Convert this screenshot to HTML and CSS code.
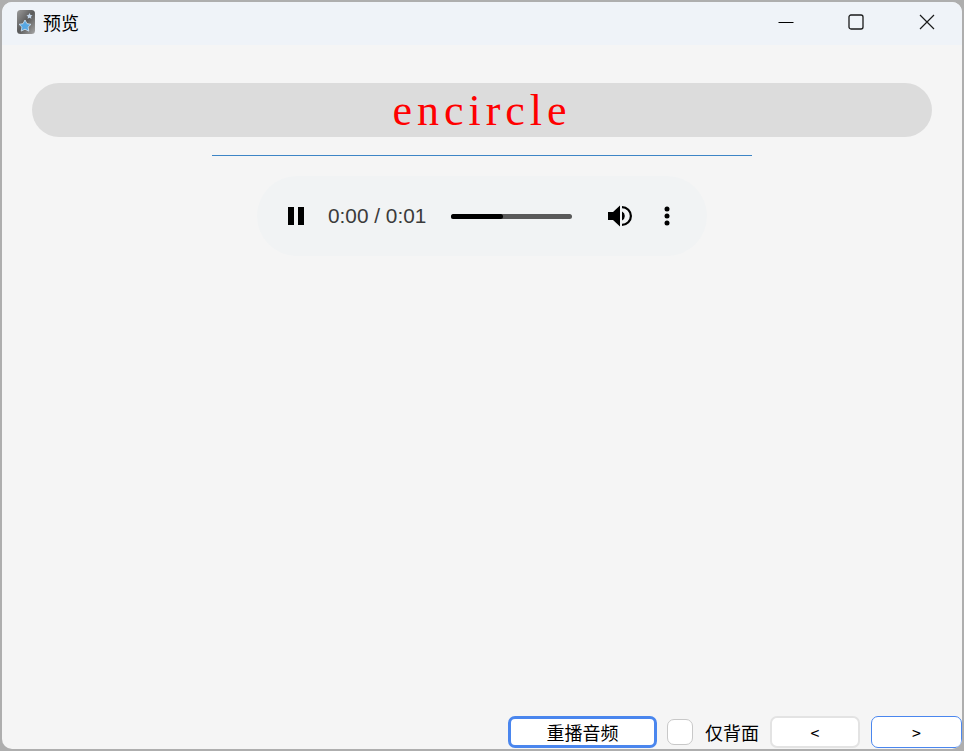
FILE: index.html
```html
<!DOCTYPE html>
<html lang="zh-CN">
<head>
  <meta charset="UTF-8" />
  <title>预览</title>
  <link rel="stylesheet" href="styles.css">
</head>
<body>
  <div class="window">

    <!-- title bar -->
    <header class="titlebar">
      <svg class="app-icon" width="18" height="24" viewBox="0 0 18 24">
        <defs>
          <linearGradient id="appbg" x1="0" y1="0" x2="1" y2="1">
            <stop offset="0" stop-color="#9c9c9c"/>
            <stop offset="0.5" stop-color="#5a5a5a"/>
            <stop offset="1" stop-color="#a8a8a8"/>
          </linearGradient>
        </defs>
        <rect x="0" y="0" width="18" height="24" rx="3.500" fill="url(#appbg)"/>
        <path d="M12.500 3l1 2 2 .3-1.500 1.500.4 2-1.900-1-1.900 1 .4-2-1.500-1.500 2-.3z" fill="#c3d6ea"/>
        <path d="M8 10l2 3.700 4 .6-2.900 2.800.7 4-3.800-1.900-3.800 1.900.7-4L2 14.300l4-.6z" fill="#58a8e4" stroke="#d5e6f5" stroke-width="0.800"/>
      </svg>
      <span class="title">预览</span>
      <div class="win-controls">
        <button class="win-btn">
          <svg width="16" height="16" viewBox="0 0 16 16"><path d="M0.500 8.500h15" stroke="#000" fill="none"/></svg>
        </button>
        <button class="win-btn">
          <svg width="16" height="16" viewBox="0 0 16 16"><rect x="1" y="1" width="14" height="14" rx="2" stroke="#1a1a1a" stroke-width="1.300" fill="none"/></svg>
        </button>
        <button class="win-btn">
          <svg width="16" height="16" viewBox="0 0 16 16"><path d="M1 1l14 14M15 1L1 15" stroke="#1a1a1a" stroke-width="1.200" fill="none"/></svg>
        </button>
      </div>
    </header>

    <main class="content">
      <div class="word">encircle</div>
      <hr class="divider">

      <!-- audio player -->
      <div class="player">
        <svg class="pause" width="16" height="18" viewBox="0 0 16 18"><path d="M0 0h6v18H0zM10 0h6v18h-6z" fill="#000"/></svg>
        <span class="time">0:00 / 0:01</span>
        <div class="track"><div class="track-fill" style="width: 43%"></div></div>
        <svg class="volume" width="26" height="24" viewBox="0 0 26 24">
          <path d="M1 8v8h5l7 6.500V1.500L6 8z" fill="#000"/>
          <path d="M15 7.500a5 5 0 0 1 0 9z" fill="#000"/>
          <path d="M15 2a10 10 0 0 1 0 20v-2.200a7.800 7.800 0 0 0 0-15.600z" fill="#000"/>
        </svg>
        <svg class="more" width="6" height="20" viewBox="0 0 6 20">
          <circle cx="3" cy="3" r="2.500" fill="#000"/>
          <circle cx="3" cy="10" r="2.500" fill="#000"/>
          <circle cx="3" cy="17" r="2.500" fill="#000"/>
        </svg>
      </div>
    </main>

    <footer class="actions">
      <button class="btn btn-replay">重播音频</button>
      <span class="check"></span>
      <span class="check-label">仅背面</span>
      <button class="btn btn-prev">&lt;</button>
      <button class="btn btn-next">&gt;</button>
    </footer>
  </div>
</body>
</html>
```

FILE: styles.css
```css
html, body {
  height: 100%;
}
body {
  margin: 0;
  background: #aeaeae;
  font-family: "Liberation Sans", "Noto Sans CJK SC", sans-serif;
  overflow: hidden;
}
.window {
  box-sizing: border-box;
  height: 747px;
  margin: 2px 2px 0;
  background: #f5f5f5;
  border-radius: 10px;
  display: flex;
  flex-direction: column;
  overflow: hidden;
}
.titlebar {
  box-sizing: border-box;
  height: 43px;
  flex: none;
  background: #eff3f8;
  display: flex;
  align-items: center;
  padding: 0 0 3px 15px;
}
.app-icon {
  flex: none;
}
.title {
  margin-left: 8px;
  font-size: 18px;
  color: #000;
  font-family: "Noto Sans CJK SC", sans-serif;
}
.win-controls {
  margin-left: auto;
  display: flex;
}
.win-btn {
  width: 71px;
  height: 40px;
  padding: 0;
  border: none;
  background: none;
  display: flex;
  align-items: center;
  justify-content: center;
}
.win-btn:first-child {
  margin-right: -1px;
}
.content {
  flex: 1;
  display: flex;
  flex-direction: column;
  align-items: center;
  padding-top: 38px;
}
.word {
  box-sizing: border-box;
  width: 900px;
  height: 54px;
  border-radius: 27px;
  background: #dcdcdc;
  color: #ff0000;
  font-family: "Liberation Serif", serif;
  font-size: 44px;
  letter-spacing: 5px;
  line-height: 56px;
  text-align: center;
}
.divider {
  width: 540px;
  height: 1px;
  margin: 18px 0 20px;
  border: none;
  background: #3d85c6;
}
.player {
  box-sizing: border-box;
  width: 450px;
  height: 80px;
  border-radius: 40px;
  background: #f1f3f4;
  display: flex;
  align-items: center;
  padding-left: 31px;
  color: #3b3b3b;
}
.pause {
  flex: none;
}
.time {
  width: 98px;
  flex: none;
  margin-left: 24px;
  font-size: 20.800px;
  white-space: nowrap;
}
.track {
  margin-left: 25px;
  width: 121px;
  height: 5px;
  border-radius: 3px;
  background: #595959;
  flex: none;
}
.track-fill {
  height: 100%;
  border-radius: 3px;
  background: #000;
}
.volume {
  margin-left: 35px;
  flex: none;
}
.more {
  margin-left: 31px;
  flex: none;
}
.actions {
  flex: none;
  display: flex;
  align-items: center;
  justify-content: flex-end;
  height: 32px;
  margin-bottom: 1px;
}
.btn {
  box-sizing: border-box;
  height: 32px;
  padding: 0;
  background: #fff;
  color: #000;
  font-family: "Noto Sans CJK SC", sans-serif;
  border-radius: 7px;
}
.btn-replay {
  width: 149px;
  font-size: 18px;
  border: 3px solid #4a86ee;
}
.btn-prev {
  width: 90px;
  margin-left: 11px;
  font-size: 16px;
  border: 2px solid #e3e3e3;
}
.btn-next {
  width: 91px;
  margin-left: 11px;
  font-size: 16px;
  border: 1.500px solid #4a86ee;
}
.check {
  box-sizing: border-box;
  width: 26px;
  height: 26px;
  margin-left: 10px;
  background: #fff;
  border: 1.500px solid #c8c8c8;
  border-radius: 7px;
}
.check-label {
  margin-left: 12px;
  font-family: "Noto Sans CJK SC", sans-serif;
  font-size: 18px;
  color: #000;
  white-space: nowrap;
}
```
